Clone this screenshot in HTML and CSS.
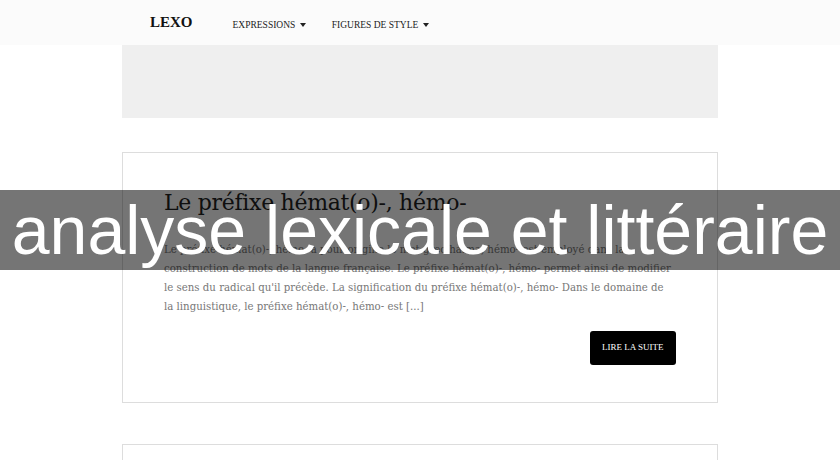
FILE: index.html
```html
<!DOCTYPE html>
<html lang="fr">
<head>
    <meta charset="UTF-8">
    <meta name="viewport" content="width=device-width, initial-scale=1.0">
    <title>Lexo - analyse lexicale et littéraire</title>
    <link rel="stylesheet" href="styles.css">
</head>
<body>
<header class="header">
    <nav class="nav">
        <a class="logo" href="#">LEXO</a>
        <ul class="menu">
            <li><a href="#">Expressions <span class="caret"></span></a></li>
            <li><a href="#">Figures de style <span class="caret"></span></a></li>
        </ul>
    </nav>
</header>

<main class="main">
    <div class="banner"></div>

    <article class="post">
        <h2 class="post-title">Le préfixe hémat(o)-, hémo-</h2>
        <p class="post-text">Le préfixe hémat(o)-, hémo- a pour origine le mot grec haima, hémo- est employé dans la
            construction de mots de la langue française. Le préfixe hémat(o)-, hémo- permet ainsi de modifier le
            sens du radical qu'il précède. La signification du préfixe hémat(o)-, hémo- Dans le domaine de la
            linguistique, le préfixe hémat(o)-, hémo- est [...]</p>
        <div class="post-foot">
            <a class="btn" href="#">Lire la suite</a>
        </div>
    </article>

    <article class="post"></article>
</main>

<div class="overlay">analyse lexicale et littéraire</div>
</body>
</html>
```

FILE: styles.css
```css
body {
    margin: 0;
    background: #fff;
    font-family: "Liberation Serif", "Times New Roman", serif;
    color: #333;
}
a {
    text-decoration: none;
    color: inherit;
}
.header {
    height: 45px;
    background: #fbfbfb;
}
.nav {
    width: 596px;
    margin: 0 auto;
    height: 45px;
    display: flex;
    align-items: center;
    padding: 0 0 0 28px;
    box-sizing: border-box;
}
.logo {
    font-size: 15px;
    font-weight: bold;
    color: #111;
    margin-right: 40px;
}
.menu {
    list-style: none;
    display: flex;
    gap: 26px;
    margin: 0;
    padding: 0;
}
.menu a {
    font-size: 9.5px;
    text-transform: uppercase;
    color: #222;
}
.caret {
    display: inline-block;
    width: 0;
    height: 0;
    margin-left: 2px;
    vertical-align: middle;
    border-top: 4px solid #222;
    border-left: 3.5px solid transparent;
    border-right: 3.5px solid transparent;
}
.main {
    width: 596px;
    margin: 0 auto;
}
.banner {
    height: 73px;
    background: #efefef;
}
.post {
    border: 1px solid #ddd;
    padding: 35px 41px 37px;
    margin-top: 34px;
    min-height: 40px;
}
.post + .post {
    margin-top: 41px;
}
.post-title {
    font-family: "DejaVu Serif", serif;
    font-size: 22px;
    font-weight: normal;
    letter-spacing: -0.3px;
    color: #222;
    margin: 0 0 22px;
    line-height: 30px;
}
.post-text {
    font-family: "DejaVu Serif", serif;
    font-size: 10.2px;
    line-height: 19px;
    color: #777;
    margin: 0;
}
.post-foot {
    display: flex;
    justify-content: flex-end;
    margin-top: 15px;
}
.btn {
    background: #000;
    color: #fff;
    font-size: 9px;
    text-transform: uppercase;
    padding: 11px 12.5px 12px;
    border-radius: 3px;
    line-height: 11px;
}
.overlay {
    position: absolute;
    left: 0;
    right: 0;
    top: 190px;
    height: 80px;
    background: rgba(0, 0, 0, 0.54);
    color: #fff;
    font-family: "Liberation Sans", Arial, sans-serif;
    font-size: 68px;
    line-height: 80px;
    text-align: center;
    white-space: nowrap;
    overflow: hidden;
}
```
